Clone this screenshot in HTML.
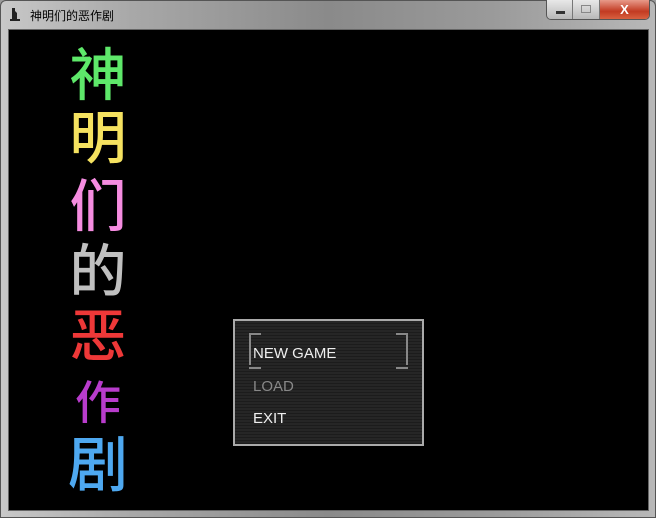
<!DOCTYPE html>
<html><head><meta charset="utf-8"><style>
*{margin:0;padding:0;box-sizing:border-box}
body{width:656px;height:518px;overflow:hidden;background:#9a9a9a;font-family:"Liberation Sans","Noto Sans CJK SC",sans-serif;position:relative}
.frame{position:absolute;left:0;top:0;width:656px;height:518px;border:1px solid #555;border-radius:6px 6px 0 0;background:linear-gradient(90deg,#c8c8c8 0%,#a8a8a8 20%,#8a8a8a 50%,#9a9a9a 75%,#b8b8b8 100%)}
.title{position:absolute;left:30px;top:7px;font-size:12px;color:#000}
.icon{position:absolute;left:9px;top:7px;width:12px;height:14px}
.btns{position:absolute;left:546px;top:0;width:104px;height:20px;border:1px solid #555;border-top:none;border-radius:0 0 5px 5px;overflow:hidden;display:flex}
.b{height:100%;background:linear-gradient(#e8e8e8,#b8b8b8);border-right:1px solid #777;position:relative}
.x{background:linear-gradient(#e89a8a,#c23a22 60%,#d86040);color:#fff;font-size:13px;font-weight:bold;text-align:center;line-height:19px}
.game{position:absolute;left:8px;top:29px;width:641px;height:482px;background:#000;border:1px solid #666}
.ch{position:absolute;left:54px;width:70px;text-align:center;font-family:"Noto Sans CJK SC",sans-serif;font-size:57px;line-height:60px;font-weight:500}
.menu{position:absolute;left:224px;top:289px;width:191px;height:127px;border:2px solid #aaa;background:repeating-linear-gradient(#262626 0 2px,#1c1c1c 2px 3px)}
.it{position:absolute;left:18px;font-size:15px;color:#eee;font-family:"Liberation Sans",sans-serif}
.sel{position:absolute;left:14px;top:12px;width:159px;height:32px;border:2px solid #888;border-top:none;border-bottom:none}
.sel:before,.sel:after{content:"";position:absolute;width:12px;height:32px;border-top:2px solid #888;border-bottom:2px solid #888;top:0}
.sel:before{left:-2px}.sel:after{right:-2px}
</style></head><body>
<div class="frame"></div>
<svg class="icon" viewBox="0 0 12 14"><path d="M3 1h3v3l2 2v6h3v2H1v-2h2z" fill="#222"/></svg>
<div class="title">神明们的恶作剧</div>
<div class="btns"><div class="b" style="width:27px"><div style="position:absolute;left:9px;top:11px;width:9px;height:3px;background:#333"></div></div><div class="b" style="width:27px"><div style="position:absolute;left:8px;top:5px;width:10px;height:8px;border:1px solid #888"></div></div><div class="b x" style="width:50px;border:none">X</div></div>
<div class="game">
<div class="ch" style="top:11px;color:#5ee86a">神</div>
<div class="ch" style="top:74px;color:#f5e260">明</div>
<div class="ch" style="top:142px;color:#f58ce0">们</div>
<div class="ch" style="top:207px;color:#c0c0c0">的</div>
<div class="ch" style="top:272px;color:#ee3838">恶</div>
<div class="ch" style="top:340px;color:#b83ccc;font-size:46px">作</div>
<div class="ch" style="top:401px;color:#4ea8f0;font-size:60px">剧</div>
<div class="menu">
<div class="sel"></div>
<div class="it" style="top:24px">NEW GAME</div>
<div class="it" style="top:57px;color:#888">LOAD</div>
<div class="it" style="top:89px">EXIT</div>
</div>
</div>
</body></html>
